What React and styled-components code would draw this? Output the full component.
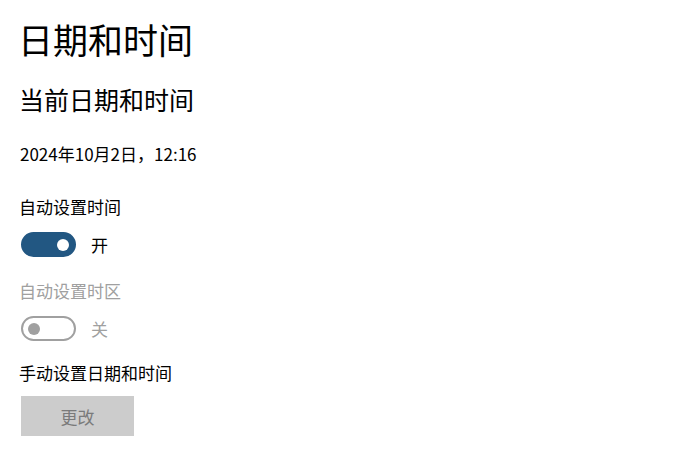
import React from 'react';
import styled, { createGlobalStyle } from 'styled-components';

const GlobalStyle = createGlobalStyle`
  html, body {
    margin: 0;
    padding: 0;
    background: #ffffff;
  }
  body {
    font-family: "Noto Sans CJK SC", "Noto Sans", sans-serif;
    color: #000000;
  }
`

const Page = styled.div`
  display: flex;
  flex-direction: column;
  align-items: flex-start;
  padding: 14px 20px 0 19px;
  width: 674px;
  height: 468px;
  box-sizing: border-box;
`

const Title = styled.h1`
  margin: 0 0 0 -1px;
  font-size: 35px;
  font-weight: 400;
  line-height: 50px;
`

const Subtitle = styled.h2`
  margin: 18px 0 0 0;
  font-size: 25px;
  font-weight: 400;
  line-height: 34px;
`

const DateText = styled.div`
  margin-top: 26px;
  margin-left: 1px;
  font-size: 17px;
  line-height: 24px;
`

const Label = styled.div`
  margin-top: ${p => p.$gap}px;
  font-size: 17px;
  line-height: 24px;
  color: ${p => (p.$disabled ? '#a0a0a0' : '#000000')};
`

const ToggleRow = styled.div`
  display: flex;
  align-items: center;
  gap: 15px;
  margin-top: 13px;
  margin-left: 2px;
`

const Track = styled.div`
  width: 55px;
  height: 25px;
  box-sizing: border-box;
  border-radius: 13px;
  position: relative;
  background: ${p => (p.$on ? '#225782' : 'transparent')};
  border: 2px solid ${p => (p.$on ? '#225782' : '#a0a0a0')};
`

const Knob = styled.span`
  position: absolute;
  top: 50%;
  width: 12px;
  height: 12px;
  margin-top: -6px;
  border-radius: 50%;
  background: ${p => (p.$on ? '#ffffff' : '#a0a0a0')};
  ${p => (p.$on ? 'right: 5px;' : 'left: 5px;')}
`

const ToggleText = styled.span`
  font-size: 17px;
  line-height: 24px;
  color: ${p => (p.$disabled ? '#a0a0a0' : '#000000')};
`

const Button = styled.button`
  margin-top: 11px;
  margin-left: 2px;
  width: 113px;
  height: 40px;
  border: none;
  background: #cccccc;
  color: #7a7a7a;
  font-family: "Noto Sans CJK SC", "Noto Sans", sans-serif;
  font-size: 17px;
  padding: 0;
`

const Toggle = ({ on, label, disabled }) => (
  <ToggleRow>
    <Track $on={on}>
      <Knob $on={on} />
    </Track>
    <ToggleText $disabled={disabled}>{label}</ToggleText>
  </ToggleRow>
);

const App = () => {
  return (
    <>
      <GlobalStyle />
      <Page>
        <Title>日期和时间</Title>
        <Subtitle>当前日期和时间</Subtitle>
        <DateText>2024年10月2日，12:16</DateText>
        <Label $gap={29}>自动设置时间</Label>
        <Toggle on label="开" />
        <Label $gap={22} $disabled>自动设置时区</Label>
        <Toggle label="关" disabled />
        <Label $gap={20}>手动设置日期和时间</Label>
        <Button disabled>更改</Button>
      </Page>
    </>
  );
}

export default App;
